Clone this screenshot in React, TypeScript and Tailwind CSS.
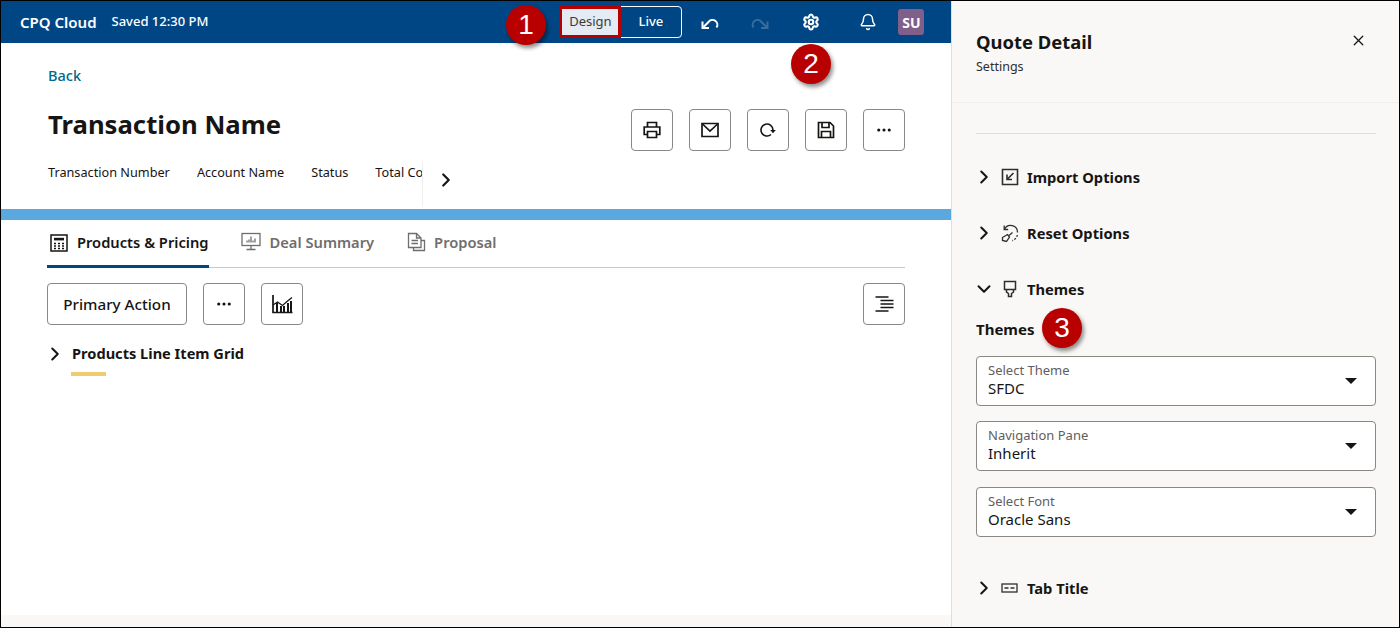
import { ChevronDown, ChevronRight, Bell, Ellipsis, X, Settings } from "lucide-react";
import type { ReactNode } from "react";

const font = { fontFamily: '"Noto Sans", sans-serif' };

const IconButton = ({ children }: { children: ReactNode }) => (
  <button className="flex h-[42px] w-[42px] items-center justify-center rounded-[4px] border border-[#8a8885] bg-white text-[#161513]">
    {children}
  </button>
);

const PrinterIcon = () => (
  <svg width="18" height="18" viewBox="0 0 18 18" fill="none" stroke="#161513" strokeWidth="1.7">
    <path d="M4.5 6V1.500h9V6" />
    <path d="M4.500 13.500H1.200V6h15.600v7.500h-3.300" />
    <path d="M4.500 10.500h9v6h-9z" />
  </svg>
);

const MailIcon = () => (
  <svg width="18" height="16" viewBox="0 0 18 16" fill="none" stroke="#161513" strokeWidth="1.7">
    <path d="M1 1.500h16v13H1z" />
    <path d="M1.500 2l7.500 7 7.500-7" />
  </svg>
);

const RefreshIcon = () => (
  <svg width="18" height="18" viewBox="0 0 18 18" fill="none" stroke="#161513" strokeWidth="1.6">
    <path d="M14 9A6 6 0 1 0 12 13.500" />
    <path d="M11.200 9h5.600L14 12.200z" fill="#161513" stroke="none" />
  </svg>
);

const SaveIcon = () => (
  <svg width="18" height="18" viewBox="0 0 18 18" fill="none" stroke="#161513" strokeWidth="1.7">
    <path d="M1.500 1.500h11.500l3.500 3.500v11.500h-15z" />
    <path d="M5 1.500v5h7v-5M4.500 16.500v-6h9v6" />
  </svg>
);

const UndoIcon = ({ flip, className = "" }: { flip?: boolean; className?: string }) => (
  <svg className={className} width="19" height="19" viewBox="0 0 19 19" fill="none" stroke="currentColor" strokeWidth="2" style={flip ? { transform: "scaleX(-1)" } : undefined}>
    <path d="M2.500 8.500v6.500h6.500" />
    <path d="M2.500 15l6-6a4.500 4.500 0 0 1 8 5.500" />
  </svg>
);

const CalculatorIcon = () => (
  <svg width="18" height="18" viewBox="0 0 18 18" fill="none" stroke="#161513" strokeWidth="1.5">
    <rect x="1" y="1" width="16" height="16" />
    <rect x="4" y="3.800" width="10" height="2.600" fill="#161513" stroke="none" />
    <path d="M4 9.500h2M8 9.500h2M12 9.500h2M4 12h2M8 12h2M12 12h2M4 14.500h2M8 14.500h2M12 14.500h2" strokeWidth="1.300" />
  </svg>
);

const PresentationIcon = () => (
  <svg width="20" height="20" viewBox="0 0 20 20" fill="none" stroke="#6f6e6c" strokeWidth="1.300">
    <rect x="1" y="1.500" width="18" height="12" />
    <path d="M10 13.500v3.500M5.500 17.500h9" />
    <path d="M6 10.500v-2M10 10.500v-6M14 10.500v-4M8 10.500v-3M12 10.500v-2" />
  </svg>
);

const DocsIcon = () => (
  <svg width="19" height="20" viewBox="0 0 19 20" fill="none" stroke="#6f6e6c" strokeWidth="1.300">
    <path d="M1.500 1.500h8l4.500 4.500v9.500h-12.500z" />
    <path d="M9.500 1.500v4.500h4.500M4.500 8.500h6.500M4.500 11.500h6.500" />
    <path d="M14 8.500h3.500v10h-11v-3" />
  </svg>
);

const ChartIcon = () => (
  <svg width="22" height="20" viewBox="0 0 22 20" fill="none" stroke="#161513">
    <path d="M2 1v17.500h19.500" strokeWidth="1.700" />
    <path d="M2 11l4.500-3 5 3.500 4.500-4 5-4" strokeWidth="1.300" />
    <path d="M6 18v-9M10 18v-6M13 18v-6M17 18v-9M20 18v-11" strokeWidth="2" />
  </svg>
);

const ListIcon = () => (
  <svg width="20" height="18" viewBox="0 0 20 18" fill="none" stroke="#161513" strokeWidth="1.400">
    <path d="M1.500 2h13M6.500 5.500h13M6.500 9h13M6.500 12.500h13M1.500 16h13" />
  </svg>
);

const ImportIcon = () => (
  <svg width="18" height="18" viewBox="0 0 18 18" fill="none" stroke="#312d2a" strokeWidth="1.600">
    <path d="M1.500 1.500h15v15h-15z" />
    <path d="M12.500 5l-6.500 6.500M6 6.500v5h5" />
  </svg>
);

const ResetIcon = () => (
  <svg width="18" height="18" viewBox="0 0 18 18" fill="none" stroke="#312d2a" strokeWidth="1.300">
    <path d="M3.500 5.500a6.800 6.800 0 0 1 13 3" />
    <path d="M16.300 11a6.800 6.800 0 0 1-5 5.500" strokeDasharray="2 1.500" />
    <path d="M3.200 1.500v4h4" />
    <path d="M1.500 13.500l5-3 2 2.500-3 4.500-4-1z" />
    <path d="M8 11.500l3.500-3" />
  </svg>
);

const BrushIcon = () => (
  <svg width="16" height="18" viewBox="0 0 16 18" fill="none" stroke="#312d2a" strokeWidth="1.500">
    <path d="M2.500 1.500h11v8h-11z" />
    <path d="M4.500 9.500v2.500l2 1.500v3h3v-3l2-1.500v-2.500" />
  </svg>
);

const FieldIcon = () => (
  <svg width="17" height="10" viewBox="0 0 17 10" fill="none" stroke="#312d2a" strokeWidth="1.300">
    <rect x="1" y="1" width="15" height="8" />
    <path d="M3.500 5h4M9.500 5h4" />
  </svg>
);

const Badge = ({ n, className }: { n: number; className: string }) => (
  <div
    className={`absolute flex h-[40px] w-[40px] items-center justify-center rounded-full bg-[#b90000] text-[28px] leading-none text-white shadow-[2px_3px_4px_rgba(0,0,0,0.45)] ${className}`}
    style={{ fontFamily: '"Liberation Sans", sans-serif' }}
  >
    {n}
  </div>
);

const Section = ({ icon, title, open, className = "" }: { icon: ReactNode; title: string; open?: boolean; className?: string }) => (
  <div className={`flex h-[24px] items-center text-[#161513] ${className}`}>
    <div className="flex w-[16px] justify-center">
      {open ? <ChevronDown className="shrink-0" size={22} strokeWidth={2.2} /> : <ChevronRight className="shrink-0" size={22} strokeWidth={2.2} />}
    </div>
    <div className="ml-[8px] flex w-[19px] justify-center">{icon}</div>
    <span className="ml-[8px] text-[14.7px] font-bold">{title}</span>
  </div>
);

const SelectField = ({ label, value }: { label: string; value: string }) => (
  <div className="flex h-[50px] items-center justify-between rounded-[4px] border border-[#8a8885] bg-white pr-[18px] pl-[11px]">
    <div className="flex flex-col">
      <span className="text-[13px] leading-[15px] text-[#5f5e5c]">{label}</span>
      <span className="text-[15px] leading-[21px] text-[#161513]">{value}</span>
    </div>
    <div className="h-0 w-0 border-x-[6px] border-t-[6px] border-x-transparent border-t-[#161513]" />
  </div>
);

export default function App() {
  return (
    <div className="relative flex h-[628px] w-[1400px] overflow-hidden border border-black bg-white" style={font}>
      <div className="flex w-[950px] flex-col">
        <header className="flex h-[42px] items-center bg-[#004685] pl-[19px] text-white">
          <span className="text-[15px] font-semibold">CPQ Cloud</span>
          <span className="ml-[15px] text-[13px] font-medium">Saved 12:30 PM</span>
          <div className="ml-[351px] flex h-[32px] w-[123px] rounded-[4px] border border-white">
            <div className="m-[-1px] flex h-[32px] w-[62px] items-center justify-center border-[3px] border-[#b90000] bg-[#e4ebf3] text-[13px] text-[#3a3a3a]">
              Design
            </div>
            <div className="flex flex-1 items-center justify-center text-[13px] font-medium">Live</div>
          </div>
          <UndoIcon className="ml-[18px]" />
          <UndoIcon className="ml-[32px] text-[#3a6d9e]" flip />
          <Settings className="ml-[32px]" size={18} strokeWidth={2.8} />
          <Bell className="ml-[39px]" size={18} strokeWidth={2} />
          <div className="ml-[21px] flex h-[26px] w-[26px] items-center justify-center rounded-[3px] bg-[#80608a] text-[14px] font-bold">SU</div>
        </header>

        <div className="flex flex-col pr-[46px] pl-[47px]">
          <a className="mt-[22px] text-[14.5px] leading-[20px] font-medium text-[#00688c]">Back</a>
          <div className="mt-[24px] flex h-[42px] items-center justify-between">
            <h1 className="pb-[9px] text-[25.7px] font-bold text-[#161513]">Transaction Name</h1>
            <div className="flex gap-[16px]">
              <IconButton><PrinterIcon /></IconButton>
              <IconButton><MailIcon /></IconButton>
              <IconButton><RefreshIcon /></IconButton>
              <IconButton><SaveIcon /></IconButton>
              <IconButton><Ellipsis size={18} strokeWidth={2.2} /></IconButton>
            </div>
          </div>
          <div className="mt-[10px] flex h-[48px] items-start text-[12.7px] text-[#161513]">
            <span className="mt-[2px] leading-[18px]">Transaction Number</span>
            <span className="mt-[2px] ml-[27px] leading-[18px]">Account Name</span>
            <span className="mt-[2px] ml-[27px] leading-[18px]">Status</span>
            <span className="mt-[2px] ml-[27px] w-[47px] overflow-hidden leading-[18px] whitespace-nowrap">Total Cost</span>
            <div className="flex h-[46px] w-[24px] items-center justify-center border-l border-[#eeeeee] pb-[8px] pl-[22px]">
              <ChevronRight className="shrink-0" size={22} strokeWidth={2.4} />
            </div>
          </div>
        </div>

        <div className="h-[11px] bg-[#5ba8df]" />

        <div className="flex flex-1 flex-col pr-[46px] pl-[46px]">
          <nav className="flex h-[48px] border-b border-[#c9c8c6]">
            <div className="flex h-[48px] items-center gap-[9px] border-b-[3px] border-[#004685] pl-[3px] text-[14.7px] font-semibold text-[#161513]">
              <CalculatorIcon />
              Products &amp; Pricing
            </div>
            <div className="ml-[32px] flex h-[44px] items-center gap-[9px] text-[14.7px] font-semibold text-[#6f6e6c]">
              <PresentationIcon />
              Deal Summary
            </div>
            <div className="ml-[33px] flex h-[44px] items-center gap-[8px] text-[14.7px] font-semibold text-[#6f6e6c]">
              <DocsIcon />
              Proposal
            </div>
          </nav>

          <div className="mt-[15px] flex items-center justify-between">
            <div className="flex gap-[16px]">
              <button className="h-[42px] w-[140px] rounded-[4px] border border-[#8a8885] text-[15.2px] font-medium text-[#161513]">Primary Action</button>
              <IconButton><Ellipsis size={18} strokeWidth={2.2} /></IconButton>
              <IconButton><ChartIcon /></IconButton>
            </div>
            <IconButton><ListIcon /></IconButton>
          </div>

          <div className="mt-[18px] flex h-[22px] items-center text-[#161513]">
            <div className="flex w-[16px] justify-center">
              <ChevronRight className="shrink-0" size={22} strokeWidth={2.2} />
            </div>
            <span className="ml-[9px] text-[14.6px] font-bold">Products Line Item Grid</span>
          </div>
          <div className="mt-[7px] ml-[24px] h-[4px] w-[35px] bg-[#f0cc71]" />
        </div>
        <div className="h-[12px] bg-[#f9f8f6]" />
      </div>

      <aside className="flex w-[448px] flex-col border-l border-[#dfdedc] bg-[#f9f8f6]">
        <div className="flex h-[102px] justify-between border-b border-[#f0efed] pt-[27px] pr-[32px] pl-[24px]">
          <div className="flex flex-col">
            <h2 className="text-[18.4px] leading-[27px] font-bold text-[#161513]">Quote Detail</h2>
            <span className="mt-[3px] text-[12.5px] leading-[18px] text-[#312d2a]">Settings</span>
          </div>
          <X className="mt-[4px] text-[#161513]" size={17} strokeWidth={1.8} />
        </div>
        <div className="flex flex-col pr-[23px] pl-[24px]">
          <div className="mt-[30px] h-px bg-[#dfdedc]" />
          <Section className="mt-[31px]" icon={<ImportIcon />} title="Import Options" />
          <Section className="mt-[32px]" icon={<ResetIcon />} title="Reset Options" />
          <Section className="mt-[32px]" icon={<BrushIcon />} title="Themes" open />
          <div className="mt-[18px] text-[15px] leading-[20px] font-bold text-[#161513]">Themes</div>
          <div className="mt-[17px] flex flex-col">
            <SelectField label="Select Theme" value="SFDC" />
            <div className="mt-[15px]">
              <SelectField label="Navigation Pane" value="Inherit" />
            </div>
            <div className="mt-[16px]">
              <SelectField label="Select Font" value="Oracle Sans" />
            </div>
          </div>
          <Section className="mt-[39px]" icon={<FieldIcon />} title="Tab Title" />
        </div>
      </aside>

      <Badge n={1} className="top-[4px] left-[505px]" />
      <Badge n={2} className="top-[43px] left-[790px]" />
      <Badge n={3} className="top-[307px] left-[1041px]" />
    </div>
  );
}
